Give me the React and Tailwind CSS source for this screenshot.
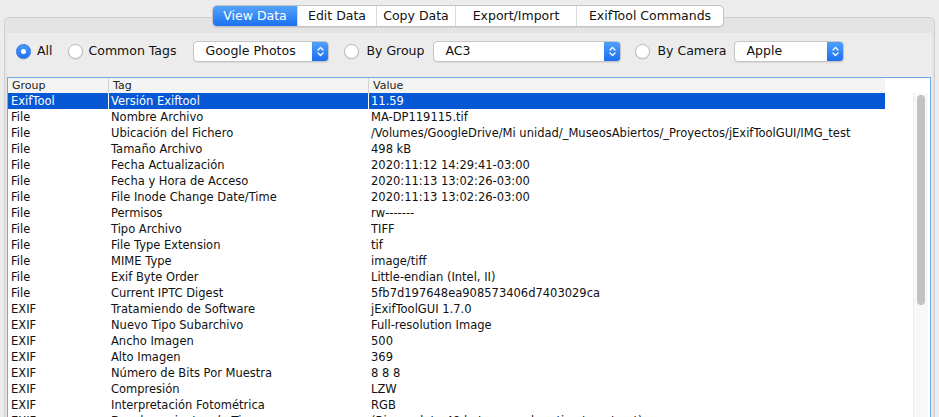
import React from "react";

const rows = [
  ["ExifTool", "Versión Exiftool", "11.59"],
  ["File", "Nombre Archivo", "MA-DP119115.tif"],
  ["File", "Ubicación del Fichero", "/Volumes/GoogleDrive/Mi unidad/_MuseosAbiertos/_Proyectos/jExifToolGUI/IMG_test"],
  ["File", "Tamaño Archivo", "498 kB"],
  ["File", "Fecha Actualización", "2020:11:12 14:29:41-03:00"],
  ["File", "Fecha y Hora de Acceso", "2020:11:13 13:02:26-03:00"],
  ["File", "File Inode Change Date/Time", "2020:11:13 13:02:26-03:00"],
  ["File", "Permisos", "rw-------"],
  ["File", "Tipo Archivo", "TIFF"],
  ["File", "File Type Extension", "tif"],
  ["File", "MIME Type", "image/tiff"],
  ["File", "Exif Byte Order", "Little-endian (Intel, II)"],
  ["File", "Current IPTC Digest", "5fb7d197648ea908573406d7403029ca"],
  ["EXIF", "Tratamiendo de Software", "jExifToolGUI 1.7.0"],
  ["EXIF", "Nuevo Tipo Subarchivo", "Full-resolution Image"],
  ["EXIF", "Ancho Imagen", "500"],
  ["EXIF", "Alto Imagen", "369"],
  ["EXIF", "Número de Bits Por Muestra", "8 8 8"],
  ["EXIF", "Compresión", "LZW"],
  ["EXIF", "Interpretación Fotométrica", "RGB"],
  ["EXIF", "Desplazamientos de Tiras", "(Binary data 48 bytes, use -b option to extract)"],
];

function Radio({ checked }) {
  if (checked) {
    return (
      <span className="flex h-[15px] w-[15px] shrink-0 items-center justify-center rounded-full border border-[#2a74e6] bg-gradient-to-b from-[#4c9bf9] to-[#1d6ff0] shadow-[0_0.5px_1px_rgba(0,0,0,0.2)]">
        <span className="h-[5px] w-[5px] rounded-full bg-white" />
      </span>
    );
  }
  return (
    <span className="block h-[15px] w-[15px] shrink-0 rounded-full border border-[#b9b9b9] bg-white shadow-[0_0.5px_1px_rgba(0,0,0,0.12)]" />
  );
}

function Select({ label, width }) {
  return (
    <div
      className={`flex h-[21px] shrink-0 items-stretch rounded-[4px] border border-[#c6c6c6] bg-white shadow-[0_1px_1px_rgba(0,0,0,0.08)] ${width}`}
    >
      <span className="flex flex-1 items-center pl-[11px] text-[12.5px] leading-none text-[#111]">{label}</span>
      <span className="flex w-[16px] items-center justify-center rounded-r-[3px] bg-gradient-to-b from-[#4fa0fb] to-[#1a6fef]">
        <svg width="7" height="11" viewBox="0 0 7 11" fill="none" stroke="white" strokeWidth="1.3" strokeLinecap="round" strokeLinejoin="round">
          <path d="M1 4 L3.5 1.5 L6 4" />
          <path d="M1 7 L3.5 9.5 L6 7" />
        </svg>
      </span>
    </div>
  );
}

export default function App() {
  const tabs = [
    ["View Data", "w-[84px]"],
    ["Edit Data", "w-[79px]"],
    ["Copy Data", "w-[79px]"],
    ["Export/Import", "w-[121px]"],
    ["ExifTool Commands", "w-[147px]"],
  ];
  return (
    <div className="relative h-[417px] w-[939px] overflow-hidden bg-[#ececec] font-['DejaVu_Sans',sans-serif] text-black">
      <div className="relative z-10 ml-[212px] mt-[5px] flex h-[22px] w-fit overflow-hidden rounded-[5px] border border-[#c3c3c3] bg-white shadow-[0_1px_1px_rgba(0,0,0,0.08)]">
        {tabs.map(([t, w], i) => (
          <div
            key={t}
            className={`flex items-center justify-center text-[12.5px] leading-none ${w} ${
              i === 0
                ? "bg-gradient-to-b from-[#53a3fb] to-[#1b70ef] text-white"
                : "border-l border-[#dadada] text-[#111]"
            }`}
          >
            {t}
          </div>
        ))}
      </div>
      <div className="mx-[4px] -mt-[10px] h-[420px] rounded-t-[5px] border border-[#cfcfcf] bg-[#e4e4e4] px-[2px] pt-[15px]">
        <div className="h-full bg-[#ececec] pt-[8px]">
          <div className="mb-[15px] flex h-[21px] items-center pl-[9px] text-[12.5px] leading-none text-[#111]">
            <Radio checked />
            <span className="ml-[6px]">All</span>
            <span className="ml-[15px] flex"><Radio /></span>
            <span className="ml-[6px]">Common Tags</span>
            <span className="ml-[17px] flex"><Select label="Google Photos" width="w-[136px]" /></span>
            <span className="ml-[15px] flex"><Radio /></span>
            <span className="ml-[7px]">By Group</span>
            <span className="ml-[9px] flex"><Select label="AC3" width="w-[188px]" /></span>
            <span className="ml-[14px] flex"><Radio /></span>
            <span className="ml-[7px]">By Camera</span>
            <span className="ml-[8px] flex"><Select label="Apple" width="w-[110px]" /></span>
          </div>
          <div className="mr-[1px] h-[400px] border border-[#6ea8e4] bg-white text-[11.5px] leading-none">
            <div className="flex h-[15px] text-[11px]">
              <div className="flex w-[877px] bg-[#f4f4f4] text-[#222]">
                <div className="flex w-[100px] items-center pl-[4px]">Group</div>
                <div className="flex w-[260px] items-center border-l border-[#d2d2d2] pl-[4px]">Tag</div>
                <div className="flex flex-1 items-center border-l border-[#d2d2d2] pl-[4px]">Value</div>
              </div>
              <div className="flex-1 bg-white" />
            </div>
            <div className="flex">
              <div className="w-[877px]">
                {rows.map((r, i) => {
                  const sel = i === 0;
                  return (
                    <div
                      key={i}
                      className={`flex h-[16px] ${sel ? "bg-[#0758d4] text-white" : "text-[#111]"}`}
                    >
                      <div className="flex w-[100px] items-center pl-[3px] pt-[1px] whitespace-nowrap">{r[0]}</div>
                      <div className="flex w-[260px] items-center border-l border-white pl-[2px] pt-[1px] whitespace-nowrap">{r[1]}</div>
                      <div className="flex flex-1 items-center border-l border-white pl-[2px] pt-[1px] whitespace-nowrap">{r[2]}</div>
                    </div>
                  );
                })}
              </div>
              <div className="flex-1" />
              <div className="mr-[2px] h-[330px] w-[15px] border-l border-[#ececec] bg-[#f8f8f8] pl-[3px] pt-[2px]">
                <div className="h-[210px] w-[8px] rounded-full bg-[#c2c2c2]" />
              </div>
            </div>
          </div>
        </div>
      </div>
    </div>
  );
}
